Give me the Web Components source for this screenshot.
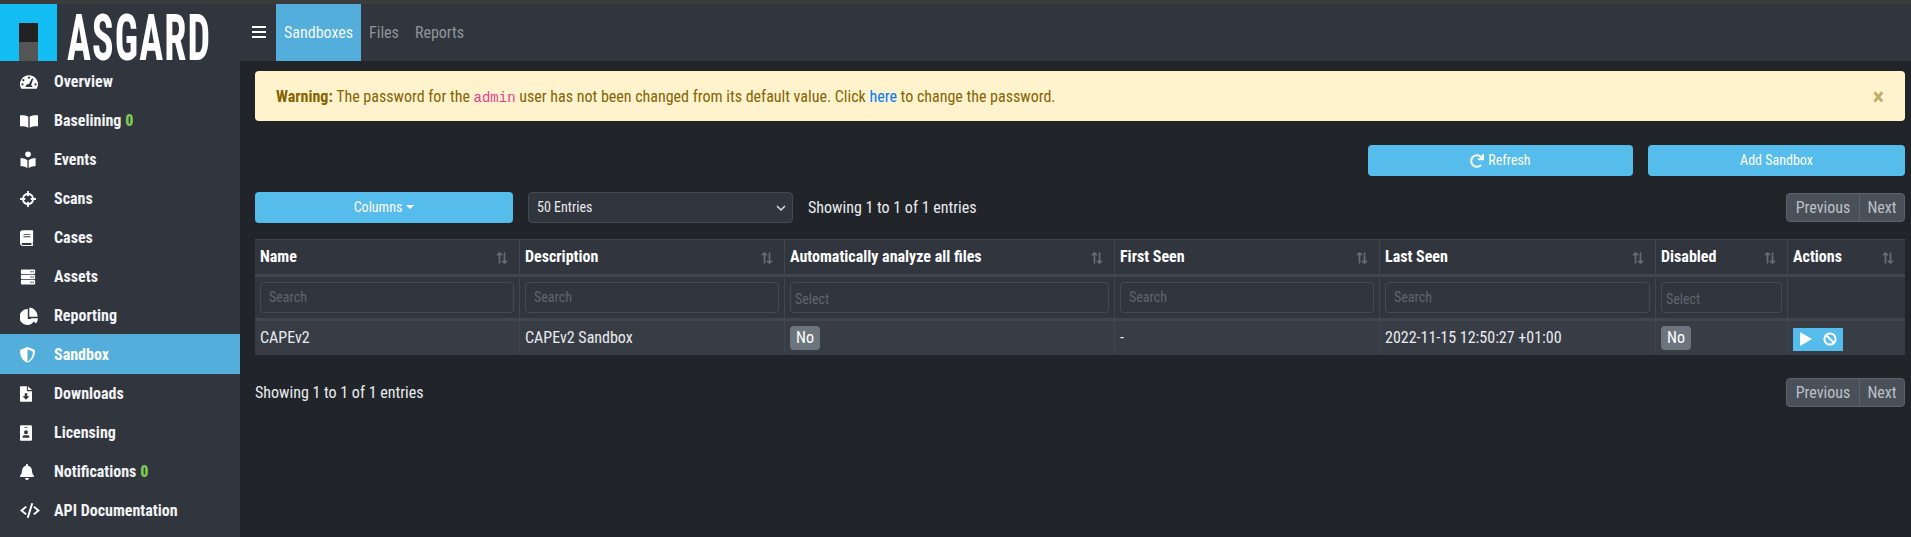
<!doctype html>
<html>
<head>
<meta charset="utf-8">
<title>Asgard</title>
<style>
  html, body { margin: 0; height: 100%; }
  body {
    background: #212429;
    color: #e9ecef;
    font: 16px/1.2 "Roboto Condensed", Roboto, "Liberation Sans", sans-serif;
    overflow: hidden;
  }
</style>
</head>
<body>
<asgard-app>
  <asgard-logo slot="logo"></asgard-logo>
  <top-bar slot="top"></top-bar>
  <side-nav slot="side">
    <nav-item icon="gauge">Overview</nav-item>
    <nav-item icon="book-open" count="0">Baselining</nav-item>
    <nav-item icon="reader">Events</nav-item>
    <nav-item icon="crosshairs">Scans</nav-item>
    <nav-item icon="book">Cases</nav-item>
    <nav-item icon="server">Assets</nav-item>
    <nav-item icon="pie">Reporting</nav-item>
    <nav-item icon="shield" active>Sandbox</nav-item>
    <nav-item icon="download">Downloads</nav-item>
    <nav-item icon="badge">Licensing</nav-item>
    <nav-item icon="bell" count="0">Notifications</nav-item>
    <nav-item icon="code">API Documentation</nav-item>
  </side-nav>
  <sandbox-page></sandbox-page>
</asgard-app>

<script>
const ICONS = {
  gauge: '<svg viewBox="0 0 18 18"><path fill-rule="evenodd" d="M9 2.2C4.100 2.200 0 6.200 0 11.100c0 1.700.5 3.300 1.300 4.700h15.400c.8-1.400 1.300-3 1.300-4.700C18 6.200 13.900 2.200 9 2.200zM9 3.600a1.100 1.100 0 1 1 0 2.200 1.100 1.100 0 0 1 0-2.200zM3.400 6.100a1.100 1.100 0 1 1 0 2.200 1.100 1.100 0 0 1 0-2.200zM2.500 10.300a1.100 1.100 0 1 1 0 2.200 1.100 1.100 0 0 1 0-2.200zM15.500 10.300a1.100 1.100 0 1 1 0 2.200 1.100 1.100 0 0 1 0-2.200zM12 5.200l1.300.5-2.200 6.200c.8.600 1.300 1.400 1.300 2.200H5.600c0-1.700 1.300-3 3-3h.4L12 5.200z"/></svg>',
  "book-open": '<svg viewBox="0 0 18 18"><path d="M0 3.300c2.800-.3 6 .1 8.300 1.400v11c-2.300-1.200-5.500-1.600-8.300-1.400zM18 3.300c-2.800-.3-6 .1-8.300 1.400v11c2.300-1.200 5.500-1.600 8.300-1.400z"/></svg>',
  reader: '<svg viewBox="0 0 18 18"><circle cx="8" cy="3.500" r="3"/><path d="M0 7.500c2.400.1 5.300.8 7.300 2.200v8.300c-2-1.300-4.900-2-7.300-2.100zM16 7.500c-2.400.1-5.300.8-7.300 2.200v8.300c2-1.300 4.900-2 7.300-2.100z"/></svg>',
  crosshairs: '<svg viewBox="0 0 18 18"><path fill-rule="evenodd" d="M8 0h2v2.300A7 7 0 0 1 15.700 8H18v2h-2.300A7 7 0 0 1 10 15.700V18H8v-2.300A7 7 0 0 1 2.300 10H0V8h2.300A7 7 0 0 1 8 2.300zM8 4.400A4.800 4.800 0 0 0 4.400 8H6v2H4.400A4.800 4.800 0 0 0 8 13.600V12h2v1.600a4.800 4.800 0 0 0 3.600-3.600H12V8h1.600A4.800 4.800 0 0 0 10 4.400V6H8z"/></svg>',
  book: '<svg viewBox="0 0 16 18"><path fill-rule="evenodd" d="M3 0h11.200c.5 0 .8.300.8.800v12.400c0 .3-.1.500-.4.700v2.200c.3.200.4.500.4.800s-.3 1.100-.8 1.100H3c-1.700 0-3-1.300-3-3V3c0-1.700 1.300-3 3-3zM4 4.300v1h8v-1zM4 7v1h8V7zM3 14.800a1.100 1.100 0 0 0 0 2.200h10v-2.200z"/></svg>',
  server: '<svg viewBox="0 0 16 18"><path fill-rule="evenodd" d="M1 .6h14c.6 0 1 .4 1 1v3c0 .6-.4 1-1 1H1c-.6 0-1-.4-1-1v-3c0-.6.400-1 1-1zm10.500 1.700a.8.8 0 1 0 0 1.600.8.800 0 0 0 0-1.600zm2.300 0a.8.8 0 1 0 0 1.600.8.800 0 0 0 0-1.600zM1 6.500h14c.6 0 1 .4 1 1v3c0 .6-.4 1-1 1H1c-.6 0-1-.4-1-1v-3c0-.6.400-1 1-1zm10.500 1.700a.8.8 0 1 0 0 1.600.8.800 0 0 0 0-1.600zm2.300 0a.8.8 0 1 0 0 1.600.8.800 0 0 0 0-1.600zM1 12.400h14c.6 0 1 .4 1 1v3c0 .6-.4 1-1 1H1c-.6 0-1-.4-1-1v-3c0-.6.400-1 1-1zm10.500 1.700a.8.8 0 1 0 0 1.600.8.800 0 0 0 0-1.600zm2.300 0a.8.8 0 1 0 0 1.600.8.800 0 0 0 0-1.600z"/></svg>',
  pie: '<svg viewBox="0 0 18 18"><path d="M7.800 2.100A7.900 7.900 0 1 0 15 12H7.800zM9.300.5v9.300h8.200A8.600 8.600 0 0 0 9.300.5zM10.400 11.200l5.600 5.200a8 8 0 0 0 1.900-5.200z"/></svg>',
  shield: '<svg viewBox="0 0 16 18"><path fill-rule="evenodd" d="M8 0c.3 0 .6.100.9.200l6 2.500c.7.300 1.100.9 1.100 1.500 0 6.200-3.600 10.600-7.100 12.100a2.400 2.400 0 0 1-1.800 0C3.600 14.900 0 11 0 4.200c0-.6.400-1.200 1.100-1.500L7.100.2C7.400.1 7.700 0 8 0zm0 2.300v13.300c2.800-1.400 5.600-5.300 5.700-10.700z"/></svg>',
  download: '<svg viewBox="0 0 14 18"><path fill-rule="evenodd" d="M8 0v4.800c0 .5.400.9.900.9H14v11.400c0 .5-.4.900-.9.900H.9c-.5 0-.9-.4-.9-.900V.9C0 .4.400 0 .900 0zM5.500 8v3.600H3l4 4 4-4H8.500V8zM9.200 0 14 4.400H9.200z"/></svg>',
  badge: '<svg viewBox="0 0 14 18"><path fill-rule="evenodd" d="M1.500 0h11C13.300 0 14 .7 14 1.500v15c0 .8-.7 1.500-1.500 1.500h-11C.7 18 0 17.300 0 16.500v-15C0 .7.700 0 1.500 0zM5.300 2.200v1.100h3.400V2.200zM7 5.800a2.300 2.300 0 1 0 0 4.600 2.300 2.300 0 0 0 0-4.600zM3 14.500h8v-1c0-1-.9-1.800-2-1.800H5c-1.100 0-2 .8-2 1.800z"/></svg>',
  bell: '<svg viewBox="0 0 448 512"><path d="M224 512c35.320 0 63.970-28.650 63.970-64H160.030c0 35.350 28.650 64 63.970 64zm215.390-149.710c-19.320-20.760-55.470-51.990-55.470-154.290 0-77.700-54.480-139.900-127.940-155.160V32c0-17.670-14.320-32-31.980-32s-31.980 14.330-31.980 32v20.840C118.560 68.100 64.080 130.300 64.080 208c0 102.300-36.150 133.530-55.470 154.290-6 6.450-8.660 14.160-8.610 21.710.11 16.400 12.980 32 32.100 32h383.800c19.120 0 32-15.600 32.100-32 .05-7.550-2.610-15.270-8.610-21.710z"/></svg>',
  code: '<svg viewBox="0 0 20 18" preserveAspectRatio="none"><path d="M11.300 0l1.900.6L8.700 18l-1.900-.6zM5.500 3.700l1.400 1.500L3 9l3.900 3.800-1.400 1.500L0 9zM14.500 3.700 20 9l-5.500 5.300-1.400-1.500L17 9l-3.900-3.800z"/></svg>',
  redo: '<svg viewBox="0 0 512 512"><path d="M500.330 0h-47.410a12 12 0 0 0-12 12.570l4 82.760A247.420 247.420 0 0 0 256 8C119.340 8 7.900 119.530 8 256.190 8.100 393.070 119.100 504 256 504a247.100 247.100 0 0 0 166.180-63.910 12 12 0 0 0 .48-17.430l-34-34a12 12 0 0 0-16.380-.55A176 176 0 1 1 402.100 157.800l-101.530-4.870a12 12 0 0 0-12.570 12v47.410a12 12 0 0 0 12 12h200.330a12 12 0 0 0 12-12V12a12 12 0 0 0-12-12z"/></svg>',
};

// width and height of each sidebar icon, measured off the reference
const ICON_SIZE = {
  gauge: [18, 18], "book-open": [18, 20], reader: [18, 17], crosshairs: [16, 16], book: [14, 16], server: [16, 16],
  pie: [18, 18], shield: [15, 17], download: [12, 16], badge: [12, 16], bell: [14, 16], code: [20, 15],
};

function define(name, css, html) {
  customElements.define(name, class extends HTMLElement {
    connectedCallback() {
      if (this.shadowRoot) return;
      this.attachShadow({ mode: "open" });
      this.shadowRoot.innerHTML = `<style>${css}</style>${typeof html === "function" ? html(this) : html}`;
    }
  });
}

define("asgard-app", `
  :host { display: grid; grid-template-columns: 240px 1fr; grid-template-rows: 57px 476px; border-top: 4px solid #3b3c3e; }
  .side, .top { background: #31353e; }
`, `
  <div class="logo"><slot name="logo"></slot></div>
  <div class="top"><slot name="top"></slot></div>
  <div class="side"><slot name="side"></slot></div>
  <div class="main"><slot></slot></div>
`);

define("asgard-logo", `
  :host { display: flex; height: 57px; background: #31353e; }
  .mark { flex: none; width: 57px; height: 57px; background: #13bdf3; display: flex; flex-direction: column; align-items: center; padding-top: 19px; box-sizing: border-box; }
  .mark i { display: block; width: 19px; height: 19px; background: #222; flex: none; }
  .mark i + i { background: #555; }
  /* tall narrow wordmark: smaller type stretched upward from its baseline */
  .word { flex: none; width: 141px; height: 30px; margin: 26px 0 0 10px; font: 700 40px/34px "Roboto Condensed", Roboto, sans-serif; letter-spacing: 1.1px; color: #fff; transform-origin: 0 30.7px; transform: scaleY(1.63); white-space: nowrap; }
`, `<div class="mark"><i></i><i></i></div><div class="word">ASGARD</div>`);

define("top-bar", `
  :host { display: flex; height: 57px; align-items: stretch; padding-left: 12px; }
  .burger { width: 14px; align-self: center; display: grid; gap: 2.5px; margin-right: 10px; margin-top: -1px; }
  .burger i { display: block; height: 2.5px; background: #fff; }
  a { display: flex; align-items: center; padding: 1px 8px 0; color: #8f959b; }
  a.on { background: #53aedb; color: #f1f8fc; }
`, `
  <div class="burger"><i></i><i></i><i></i></div>
  <a class="on">Sandboxes</a><a>Files</a><a>Reports</a>
`);

define("side-nav", `:host { display: block; }`, `<slot></slot>`);

define("nav-item", `
  :host { display: flex; align-items: center; box-sizing: border-box; height: 39px; padding: 2px 0 0 20px; color: #f1f3f5; font-weight: 700; }
  :host([active]) { background: #53aedb; color: #fff; height: 40px; margin-bottom: -1px; }
  .ic { width: 34px; flex: none; display: flex; align-items: center; }
  svg { fill: #fff; display: block; }
  b { color: #7dc855; margin-left: 4px; }
`, (el) => {
  const icon = el.getAttribute("icon");
  const [w, h] = ICON_SIZE[icon];
  const svg = ICONS[icon].replace("<svg ", `<svg width="${w}" height="${h}" `);
  const count = el.hasAttribute("count") ? `<b>${el.getAttribute("count")}</b>` : "";
  return `<span class="ic">${svg}</span><slot></slot>${count}`;
});

define("alert-box", `
  :host { display: flex; align-items: center; justify-content: space-between; box-sizing: border-box; height: 50px; padding: 1px 21px 0; background: #fff3cd; color: #856404; border-radius: 4px; }
  .x { font-weight: 700; font-size: 24px; color: #c2ac6b; line-height: 1; }
`, `<div><slot></slot></div><span class="x">×</span>`);

define("blue-button", `
  :host { display: flex; align-items: center; justify-content: center; gap: 4px; box-sizing: border-box; height: 31px; background: #56bcec; color: #fff; border-radius: 4px; font-size: 14px; }
`, `<slot></slot>`);

define("entries-select", `
  :host { display: flex; align-items: center; justify-content: space-between; box-sizing: border-box; height: 31px; width: 265px; padding: 0 6px 0 8px; background: #31353e; border: 1px solid #444a52; border-radius: 4px; color: #e9ecef; font-size: 14px; }
  svg { width: 10px; height: 8px; fill: none; stroke: #ddd; stroke-width: 1.500; }
`, `<slot></slot><svg viewBox="0 0 10 8"><path d="M1 2l4 4 4-4"/></svg>`);

define("pager-group", `
  :host { display: flex; width: 119px; height: 29px; box-sizing: border-box; border: 1px solid #5c636c; border-radius: 4px; background: #4a505a; color: #bcc1c6; }
  span { display: flex; align-items: center; justify-content: center; }
  .prev { width: 72px; border-right: 1px solid #5c636c; }
  .next { flex: 1; }
`, `<span class="prev">Previous</span><span class="next">Next</span>`);

define("filter-box", `
  :host { display: flex; align-items: center; box-sizing: border-box; height: 31px; padding-left: 8px; border: 1px solid #454b54; border-radius: 4px; color: #5f666d; font-size: 14px; }
  :host([select]) { padding: 3px 0 0 4px; }
`, `<slot></slot>`);

define("yes-no", `
  :host { display: inline-flex; align-items: center; justify-content: center; height: 24px; padding: 0 6px; border-radius: 4px; background: #6c757d; color: #fff; }
`, `<slot></slot>`);

define("row-actions", `
  :host { display: flex; align-items: center; justify-content: space-between; box-sizing: border-box; width: 50px; height: 23px; padding: 0 6px; background: #56bcec; margin-top: 2px; }
  svg { display: block; }
`, `
  <svg width="14" height="16" viewBox="0 0 14 16"><path d="M1 1l12 7-12 7z" fill="#fff"/></svg>
  <svg width="14" height="14" viewBox="0 0 14 14" fill="none" stroke="#fff" stroke-width="2"><circle cx="7" cy="7" r="5.600"/><path d="M3 3l8 8"/></svg>
`);

const SORT = '<svg width="12" height="12" viewBox="0 0 12 13" preserveAspectRatio="none" fill="none" stroke="#666d74" stroke-width="1.700"><path d="M3.500 12.500V1M1 3.500 3.500 1 6 3.500M8.500 .5V12M6 9.500 8.500 12 11 9.500"/></svg>';
const COLUMNS = [
  ["Name", 265, "Search"],
  ["Description", 265, "Search"],
  ["Automatically analyze all files", 330, "Select"],
  ["First Seen", 265, "Search"],
  ["Last Seen", 276, "Search"],
  ["Disabled", 132, "Select"],
  ["Actions", 117, ""],
];

define("sandbox-table", `
  :host { display: block; width: 1650px; }
  table { border-collapse: separate; border-spacing: 0; table-layout: fixed; width: 1650px; }
  th, td { box-sizing: border-box; padding: 0 5px; border-right: 1px solid #3f464d; text-align: left; }
  th:last-child, td:last-child { border-right: 0; }
  tr.head th { height: 38px; background: #31353e; border-top: 1px solid #3f464d; border-bottom: 3px solid #3f464d; color: #fff; }
  .h { display: flex; justify-content: space-between; align-items: center; padding-right: 6px; }
  .h svg { margin-top: 1px; }
  tr.filter td { height: 44px; background: #31353e; border-bottom: 3px solid #3f464d; }
  tr.data td { height: 34px; background: #383c45; color: #e9ecef; }
`, () => `
  <table>
    <colgroup>${COLUMNS.map((c) => `<col style="width:${c[1]}px">`).join("")}</colgroup>
    <tr class="head">${COLUMNS.map((c) => `<th><div class="h"><span>${c[0]}</span>${SORT}</div></th>`).join("")}</tr>
    <tr class="filter">${COLUMNS.map((c) => `<td>${c[2] ? `<filter-box ${c[2] === "Select" ? "select" : ""}>${c[2]}</filter-box>` : ""}</td>`).join("")}</tr>
    <tr class="data">
      <td>CAPEv2</td><td>CAPEv2 Sandbox</td><td><yes-no>No</yes-no></td><td>-</td>
      <td>2022-11-15 12:50:27 +01:00</td><td><yes-no>No</yes-no></td><td><row-actions></row-actions></td>
    </tr>
  </table>
`);

define("sandbox-page", `
  :host { display: block; padding: 10px 6px 0 15px; }
  code { font: 14px "Liberation Mono", monospace; color: #e83e8c; }
  a { color: #007bff; }
  .actions { display: flex; justify-content: flex-end; gap: 15px; margin-top: 24px; }
  .actions blue-button:first-child { width: 265px; }
  .actions blue-button:last-child { width: 257px; }
  .controls { display: flex; align-items: center; margin-top: 16px; }
  .controls blue-button { width: 258px; margin-right: 15px; }
  .controls entries-select { margin-right: 15px; }
  .controls pager-group { margin-left: auto; }
  sandbox-table { margin-top: 16px; }
  .foot { display: flex; justify-content: space-between; align-items: center; margin-top: 23px; }
  svg { width: 14px; height: 14px; fill: #fff; }
  .caret { width: 0; height: 0; border: 4px solid transparent; border-top-color: #fff; border-bottom: 0; margin-top: -2px; }
`, `
  <alert-box><strong>Warning:</strong> The password for the <code>admin</code> user has not been changed from its default value. Click <a>here</a> to change the password.</alert-box>
  <div class="actions">
    <blue-button>${ICONS.redo}<span>Refresh</span></blue-button>
    <blue-button>Add Sandbox</blue-button>
  </div>
  <div class="controls">
    <blue-button><span>Columns</span><span class="caret"></span></blue-button>
    <entries-select>50 Entries</entries-select>
    <span>Showing 1 to 1 of 1 entries</span>
    <pager-group></pager-group>
  </div>
  <sandbox-table></sandbox-table>
  <div class="foot"><span>Showing 1 to 1 of 1 entries</span><pager-group></pager-group></div>
`);
</script>
</body>
</html>
